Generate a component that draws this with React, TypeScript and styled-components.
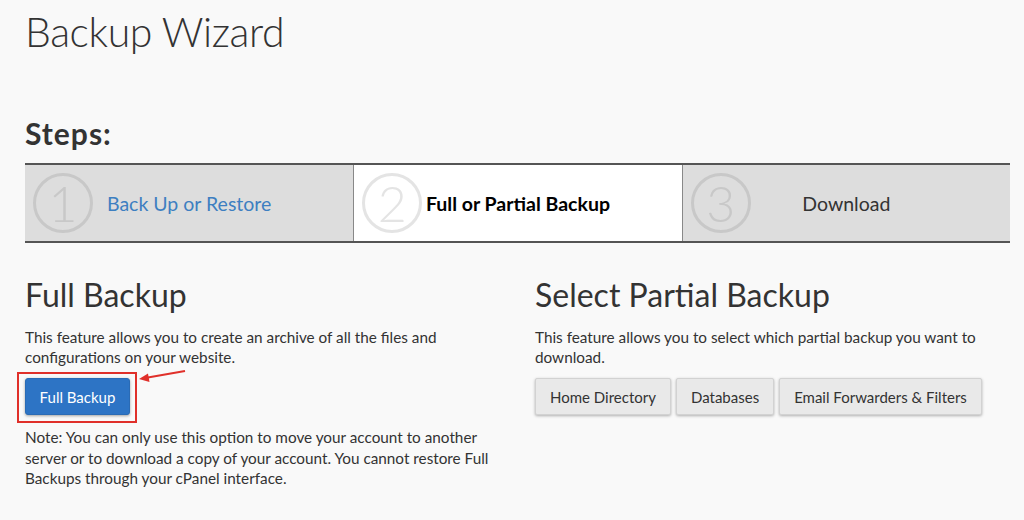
import styled, { createGlobalStyle } from "styled-components";

const GlobalStyle = createGlobalStyle`
    html, body {
        margin: 0;
        padding: 0;
        background: #f9f9f9;
    }
    body {
        font-family: Lato, "Open Sans", sans-serif;
        color: #333;
    }
`;

type Step = {
    number: number;
    label: string;
    state: "done" | "active" | "todo";
};

const steps: Step[] = [
    { number: 1, label: "Back Up or Restore", state: "done" },
    { number: 2, label: "Full or Partial Backup", state: "active" },
    { number: 3, label: "Download", state: "todo" },
];

const partialOptions = ["Home Directory", "Databases", "Email Forwarders & Filters"];

export default function App() {
    return (
        <Page>
            <GlobalStyle />
            <Title>Backup Wizard</Title>
            <StepsHeading>Steps:</StepsHeading>
            <StepBar>
                {steps.map((step) => (
                    <StepCell key={step.number} $state={step.state}>
                        <StepNumber $state={step.state}>{step.number}</StepNumber>
                        <StepLabel $state={step.state}>{step.label}</StepLabel>
                    </StepCell>
                ))}
            </StepBar>
            <Columns>
                <Section>
                    <SectionTitle>Full Backup</SectionTitle>
                    <Text>
                        This feature allows you to create an archive of all the files and
                        configurations on your website.
                    </Text>
                    <Highlight>
                        <PrimaryButton>Full Backup</PrimaryButton>
                        <Arrow width="50" height="16" viewBox="0 0 50 16">
                            <line x1="48" y1="2" x2="8" y2="9" stroke="#e0302a" strokeWidth="2" />
                            <path d="M2 10 L11 4.5 L12.5 13 Z" fill="#e0302a" />
                        </Arrow>
                    </Highlight>
                    <Note>
                        Note: You can only use this option to move your account to another
                        server or to download a copy of your account. You cannot restore Full
                        Backups through your cPanel interface.
                    </Note>
                </Section>
                <Section>
                    <SectionTitle>Select Partial Backup</SectionTitle>
                    <Text>
                        This feature allows you to select which partial backup you want to
                        download.
                    </Text>
                    <ButtonGroup>
                        {partialOptions.map((option) => (
                            <DefaultButton key={option}>{option}</DefaultButton>
                        ))}
                    </ButtonGroup>
                </Section>
            </Columns>
        </Page>
    );
}

const Page = styled.div`
    padding: 4px 14px 0 25px;
    width: 985px;
`;

const Title = styled.h1`
    margin: 0;
    font-size: 41px;
    font-weight: 300;
    line-height: 56px;
    letter-spacing: -0.4px;
    color: #333;
`;

const StepsHeading = styled.h2`
    margin: 51px 0 0;
    font-size: 30px;
    font-weight: 700;
    line-height: 44px;
    letter-spacing: 1px;
    color: #333;
`;

const StepBar = styled.div`
    margin-top: 8px;
    display: grid;
    grid-template-columns: repeat(3, 1fr);
    border-top: 2px solid #555;
    border-bottom: 2px solid #555;
    height: 76px;
`;

const StepCell = styled.div<{ $state: Step["state"] }>`
    display: grid;
    grid-template-columns: 60px 1fr 60px;
    align-items: center;
    padding: 0 8px;
    background: ${(p) => (p.$state === "active" ? "#fff" : "#dddddd")};
    & + & {
        border-left: 1px solid #888;
    }
`;

const StepNumber = styled.div<{ $state: Step["state"] }>`
    width: 54px;
    height: 54px;
    border-radius: 50%;
    border: 3px solid ${(p) => (p.$state === "active" ? "#e4e4e4" : "#c8c8c8")};
    color: ${(p) => (p.$state === "active" ? "#e4e4e4" : "#c8c8c8")};
    font-family: Lato, sans-serif;
    font-weight: 300;
    font-size: 50px;
    line-height: 54px;
    text-align: center;
`;

const StepLabel = styled.div<{ $state: Step["state"] }>`
    text-align: center;
    font-size: 19.5px;
    font-weight: ${(p) => (p.$state === "active" ? 700 : 400)};
    color: ${(p) => (p.$state === "done" ? "#3d7fc1" : p.$state === "active" ? "#000" : "#333")};
    white-space: nowrap;
`;

const Columns = styled.div`
    display: grid;
    grid-template-columns: 1fr 1fr;
    column-gap: 35px;
    margin-top: 32px;
`;

const Section = styled.div`
    display: flex;
    flex-direction: column;
    align-items: flex-start;
`;

const SectionTitle = styled.h3`
    margin: 0 0 12px;
    font-size: 32px;
    font-weight: 400;
    line-height: 40px;
    color: #333;
`;

const Text = styled.p`
    margin: 0;
    font-size: 15.3px;
    line-height: 20px;
    color: #333;
`;

const Note = styled(Text)`
    line-height: 20.5px;
`;

const Highlight = styled.div`
    position: relative;
    margin: 5px 0 4px -8px;
    padding: 4px 5px 6px 6px;
    border: 2px solid #e0302a;
`;

const Arrow = styled.svg`
    position: absolute;
    left: 118px;
    top: -5px;
`;

const PrimaryButton = styled.button`
    display: block;
    width: 105px;
    height: 37px;
    padding: 0;
    border: 1px solid #2a6bb5;
    border-radius: 3px;
    background: #2d74c5;
    color: #fff;
    font-family: Lato, sans-serif;
    font-size: 15px;
    box-shadow: 0 1px 3px rgba(0, 0, 0, 0.35);
`;

const ButtonGroup = styled.div`
    display: flex;
    gap: 5px;
    margin-top: 11px;
`;

const DefaultButton = styled.button`
    height: 37px;
    padding: 0 14px;
    border: 1px solid #d2d2d2;
    border-radius: 2px;
    background: #e9e9e9;
    color: #333;
    font-family: Lato, sans-serif;
    font-size: 15px;
    box-shadow: 0 1px 3px rgba(0, 0, 0, 0.3);
`;
